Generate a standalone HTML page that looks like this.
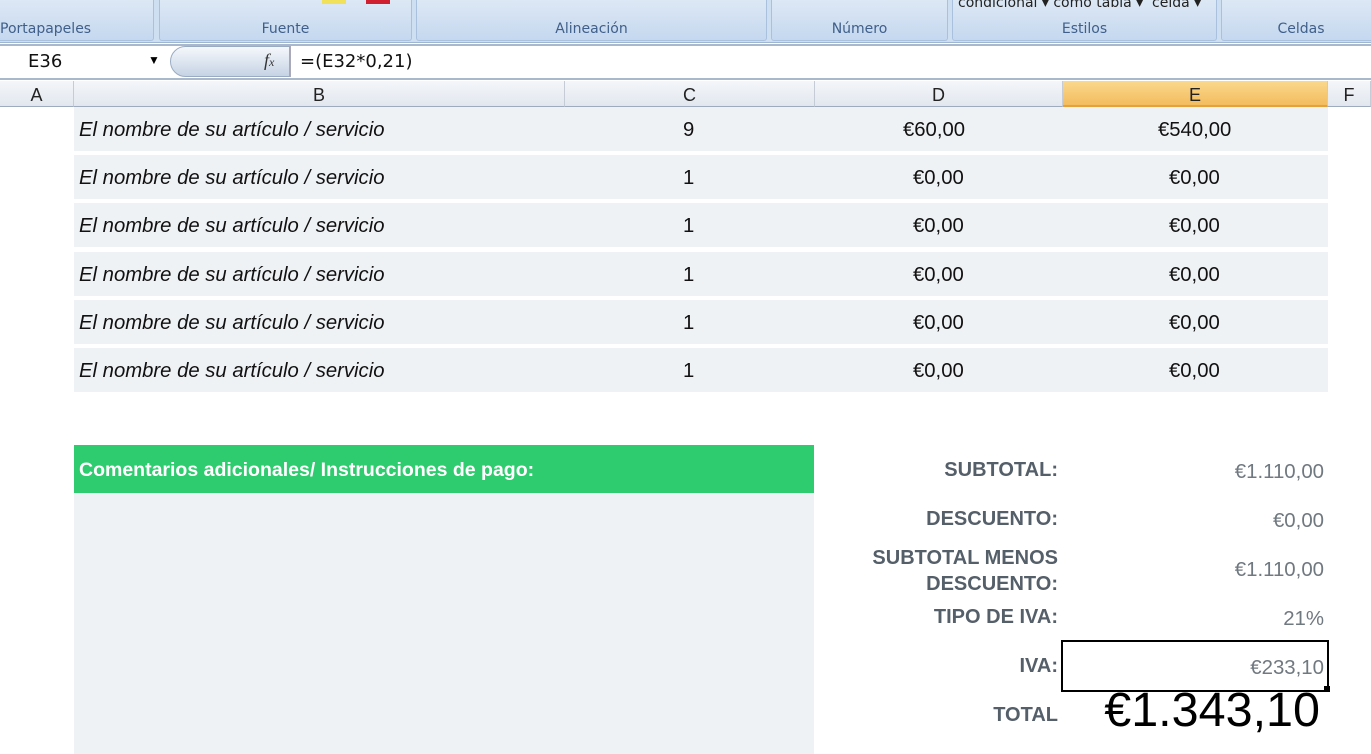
<!DOCTYPE html>
<html><head><meta charset="utf-8"><style>
*{margin:0;padding:0;box-sizing:border-box}
body{width:1371px;height:754px;overflow:hidden;background:#fff;font-family:"Liberation Sans",sans-serif;position:relative}
.a{position:absolute}
.rib{left:0;top:0;width:1371px;height:43px;background:#cfdff2;border-bottom:1px solid #9fb6d3}
.grp{top:0;height:41px;background:linear-gradient(#dde8f5,#c5d8ef);border:1px solid #aac1de;border-top:none;border-radius:0 0 3px 3px}
.gl{position:absolute;bottom:3px;width:100%;text-align:center;color:#3f5f8a;font-family:"DejaVu Sans",sans-serif;font-size:14px}
.fb{left:0;top:44px;width:1371px;height:36px;background:#fff;border-top:2px solid #a9b8ca;border-bottom:2px solid #a9b8ca}
.ch{top:81px;height:26px;background:linear-gradient(#f4f6f9,#e2e7ef);border-right:1px solid #c5ccd6;border-bottom:1px solid #9eabbd;text-align:center;font-size:18px;line-height:28px;color:#222}
.row{left:74px;width:1254px;height:44px;background:#eff2f5;font-size:20.3px;line-height:47px;color:#111}
.row span{position:absolute;top:0}
.lab{font-weight:bold;color:#555f69;font-size:20px;text-align:right;width:320px;left:738px}
.val{color:#707880;font-size:20.4px;text-align:right;width:200px;left:1124px}
</style></head><body>
<div class="a rib"></div>
<div class="a grp" style="left:-4px;width:158px"><div class="gl" style="text-align:left;padding-left:3px">Portapapeles</div></div>
<div class="a grp" style="left:159px;width:253px"><div class="gl">Fuente</div></div>
<div class="a grp" style="left:416px;width:351px"><div class="gl">Alineación</div></div>
<div class="a grp" style="left:771px;width:177px"><div class="gl">Número</div></div>
<div class="a grp" style="left:952px;width:265px"><div class="gl">Estilos</div></div>
<div class="a grp" style="left:1221px;width:160px"><div class="gl">Celdas</div></div>
<div class="a" style="left:958px;top:-5px;font-size:14px;color:#222;font-family:'DejaVu Sans',sans-serif">condicional ▾ como tabla ▾ &nbsp;celda ▾</div>
<div class="a" style="left:322px;top:0;width:24px;height:4px;background:#f1e05a"></div>
<div class="a" style="left:366px;top:0;width:24px;height:4px;background:#d02030"></div>
<div class="a fb"></div>
<div class="a" style="left:28px;top:51px;font-size:18px;font-family:'DejaVu Sans',sans-serif;color:#111">E36</div>
<div class="a" style="left:148px;top:53px;font-size:12px">▼</div>
<div class="a" style="left:170px;top:46px;width:120px;height:31px;border-radius:16px 0 0 16px;background:linear-gradient(#f5f8fc,#c6d3e4);border:1px solid #9aacc4"></div>
<div class="a" style="left:264px;top:50px;font-family:'Liberation Serif',serif;font-style:italic;font-size:18px;color:#333">f<span style="font-size:12px">x</span></div>
<div class="a" style="left:290px;top:46px;width:1px;height:31px;background:#aab"></div>
<div class="a" style="left:300px;top:51px;font-size:18px;font-family:'DejaVu Sans',sans-serif;color:#111">=(E32*0,21)</div>
<div class="a ch" style="left:0;width:74px">A</div>
<div class="a ch" style="left:74px;width:491px">B</div>
<div class="a ch" style="left:565px;width:250px">C</div>
<div class="a ch" style="left:815px;width:248px">D</div>
<div class="a ch" style="left:1063px;width:265px;background:linear-gradient(#fbd88d,#f3bc5e);border-bottom:2px solid #e3a33a">E</div>
<div class="a ch" style="left:1328px;width:43px">F</div>

<div class="a row" style="top:107px"><span style="left:5px;font-style:italic">El nombre de su artículo / servicio</span><span style="left:609px">9</span><span style="left:829px">€60,00</span><span style="left:1084px">€540,00</span></div>
<div class="a row" style="top:155px"><span style="left:5px;font-style:italic">El nombre de su artículo / servicio</span><span style="left:609px">1</span><span style="left:839px">€0,00</span><span style="left:1095px">€0,00</span></div>
<div class="a row" style="top:203px"><span style="left:5px;font-style:italic">El nombre de su artículo / servicio</span><span style="left:609px">1</span><span style="left:839px">€0,00</span><span style="left:1095px">€0,00</span></div>
<div class="a row" style="top:252px"><span style="left:5px;font-style:italic">El nombre de su artículo / servicio</span><span style="left:609px">1</span><span style="left:839px">€0,00</span><span style="left:1095px">€0,00</span></div>
<div class="a row" style="top:300px"><span style="left:5px;font-style:italic">El nombre de su artículo / servicio</span><span style="left:609px">1</span><span style="left:839px">€0,00</span><span style="left:1095px">€0,00</span></div>
<div class="a row" style="top:348px"><span style="left:5px;font-style:italic">El nombre de su artículo / servicio</span><span style="left:609px">1</span><span style="left:839px">€0,00</span><span style="left:1095px">€0,00</span></div>

<div class="a" style="left:74px;top:445px;width:740px;height:48px;background:#2ecc6e;color:#fff;font-weight:bold;font-size:19.5px;line-height:50px;padding-left:5px">Comentarios adicionales/ Instrucciones de pago:</div>
<div class="a" style="left:74px;top:493px;width:740px;height:261px;background:#eff2f5"></div>

<div class="a lab" style="top:459px">SUBTOTAL:</div>
<div class="a val" style="top:461px">€1.110,00</div>
<div class="a lab" style="top:508px">DESCUENTO:</div>
<div class="a val" style="top:510px">€0,00</div>
<div class="a lab" style="top:545px;line-height:26px">SUBTOTAL MENOS<br>DESCUENTO:</div>
<div class="a val" style="top:559px">€1.110,00</div>
<div class="a lab" style="top:606px">TIPO DE IVA:</div>
<div class="a val" style="top:608px">21%</div>
<div class="a lab" style="top:655px">IVA:</div>
<div class="a" style="left:1061px;top:640px;width:268px;height:52px;border:2px solid #000"></div>
<div class="a" style="left:1324px;top:686px;width:6px;height:6px;background:#000"></div>
<div class="a val" style="top:657px">€233,10</div>
<div class="a lab" style="top:704px">TOTAL</div>
<div class="a" style="left:1040px;top:682px;width:280px;text-align:right;font-size:48.5px;color:#000">€1.343,10</div>
</body></html>
